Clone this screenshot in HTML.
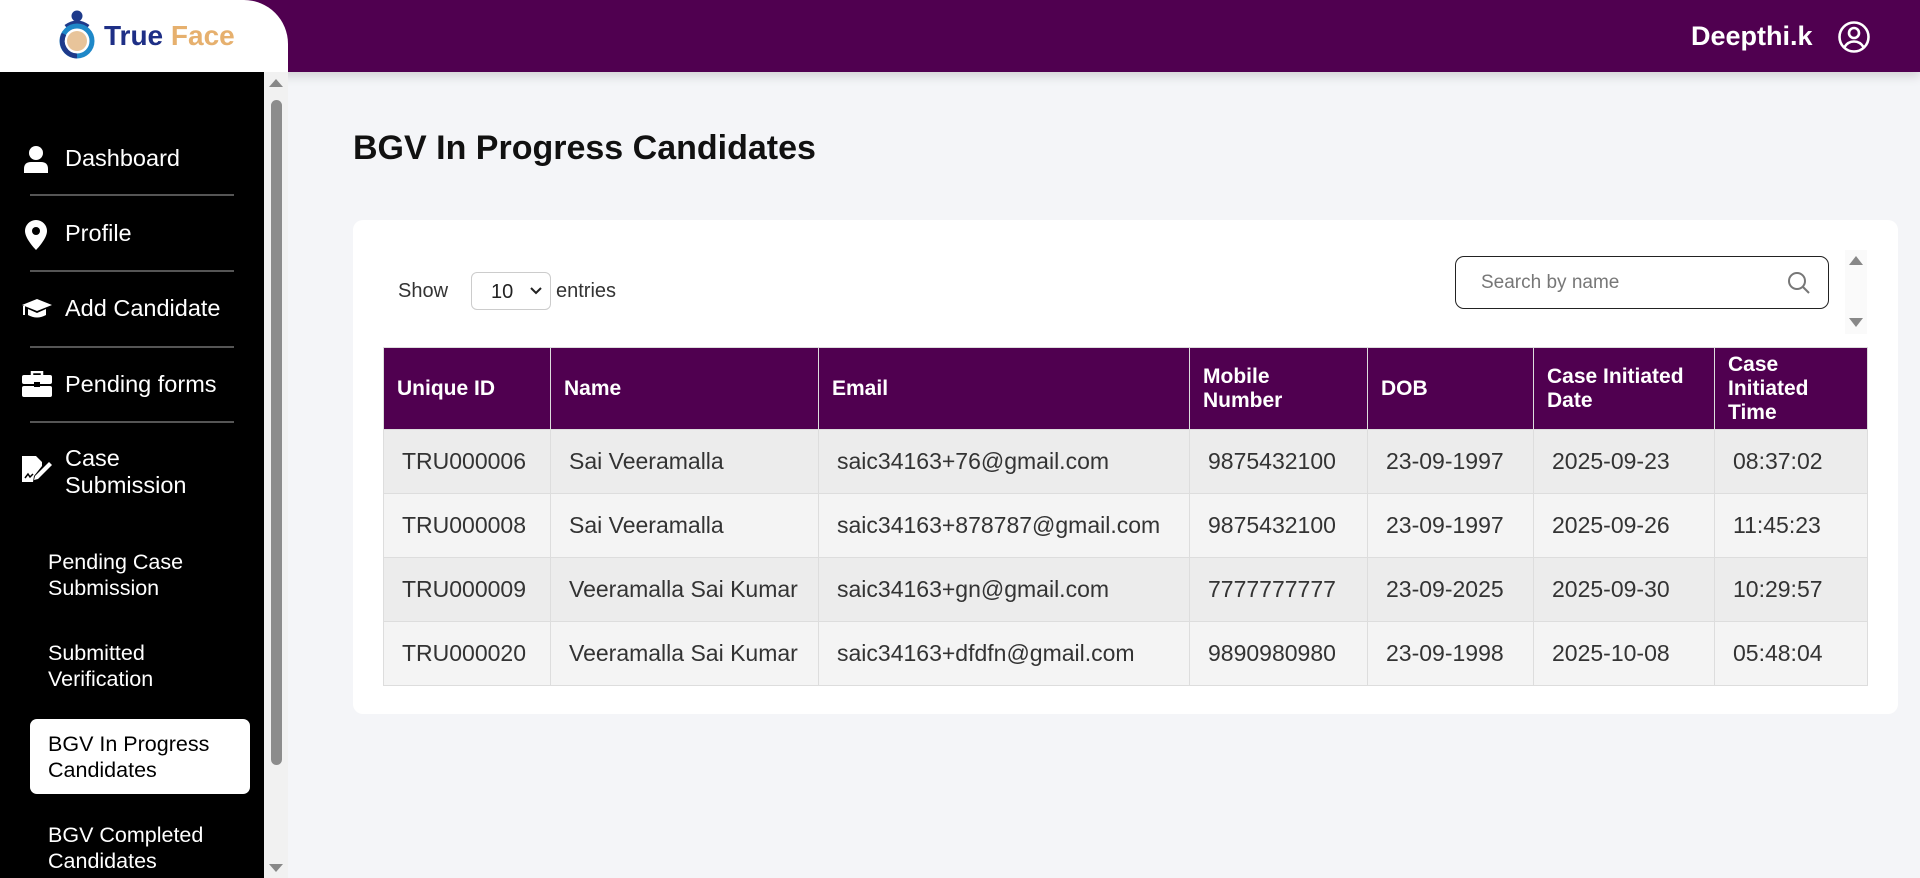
<!DOCTYPE html>
<html><head><meta charset="utf-8"><style>
*{box-sizing:border-box;margin:0;padding:0}
body{width:1920px;height:878px;overflow:hidden;background:#f4f5f8;font-family:"Liberation Sans",Arial,sans-serif;position:relative}
.top{position:absolute;left:0;top:0;width:1920px;height:72px;background:#500050;box-shadow:0 4px 10px rgba(0,0,0,.15)}
.logo{position:absolute;left:0;top:0;width:288px;height:72px;background:#fff;border-top-right-radius:44px}
.side{position:absolute;left:0;top:72px;width:264px;height:806px;background:#000}
.sb{position:absolute;left:264px;top:72px;width:24px;height:806px;background:#f1f1f1}
.thumb{position:absolute;left:271px;top:100px;width:11px;height:665px;background:#8c8c8c;border-radius:6px}
.nav{position:absolute;left:65px;color:#fff;font-size:23.5px}
.sep{position:absolute;left:30px;width:204px;height:2px;background:#555}
.ic{position:absolute;left:22px}
.sub{position:absolute;left:48px;color:#fff;font-size:21.5px;line-height:26px;font-weight:500}
.act{position:absolute;left:30px;top:719px;width:220px;height:75px;background:#fff;border-radius:7px}
.card{position:absolute;left:353px;top:220px;width:1545px;height:494px;background:#fff;border-radius:10px}
table{position:absolute;left:383px;top:347px;border-collapse:collapse;table-layout:fixed;width:1484px}
th{background:#500050;color:#fff;font-size:21px;font-weight:bold;text-align:left;padding:0 13px;height:82px;line-height:24px;border:1px solid #ddd}
td{font-size:23px;color:#333;padding:0 18px;height:64px;border:1px solid #ddd;white-space:nowrap}
tr.a td{background:#ececec} tr.b td{background:#f4f4f4}
</style></head><body>
<div class="top">
<div style="position:absolute;left:1691px;top:21px;color:#fff;font-weight:bold;font-size:27px">Deepthi.k</div>
<svg style="position:absolute;left:1837px;top:20px" width="34" height="34" viewBox="0 0 34 34"><circle cx="17" cy="17" r="14.5" fill="none" stroke="#fff" stroke-width="2.6"/><circle cx="17" cy="13" r="5" fill="none" stroke="#fff" stroke-width="2.6"/><path d="M7.5 27c2.5-4 6-5.5 9.5-5.5s7 1.5 9.5 5.5" fill="none" stroke="#fff" stroke-width="2.6"/></svg>
</div>
<div class="logo">
<svg style="position:absolute;left:56px;top:9px" width="44" height="50" viewBox="0 0 44 50"><circle cx="21" cy="7" r="5.5" fill="#1e3a8a"/><path d="M10 18 Q21 10 32 18" stroke="#1e3a8a" stroke-width="5" fill="none"/><circle cx="21" cy="32" r="15" fill="none" stroke="#1e88c8" stroke-width="5"/><path d="M8 25 A15 15 0 0 0 21 47" stroke="#1e3a8a" stroke-width="5" fill="none"/><circle cx="21" cy="32" r="10" fill="#e8c49a"/></svg>
<div style="position:absolute;left:104px;top:20px;font-size:28px;font-weight:bold;color:#1e2f86">True <span style="color:#e6b06e">Face</span></div>
</div>
<div class="side">
<svg class="ic" style="top:73px" width="28" height="28" viewBox="0 0 28 28"><circle cx="14" cy="8" r="7" fill="#fff"/><path d="M2 28v-4q0-7 7-7h10q7 0 7 7v4z" fill="#fff"/></svg>
<div class="nav" style="top:73px">Dashboard</div>
<div class="sep" style="top:122px"></div>
<svg class="ic" style="top:148px;left:25px" width="22" height="30" viewBox="0 0 22 30"><path d="M11 0A11 11 0 0 0 0 11c0 8 11 19 11 19s11-11 11-19A11 11 0 0 0 11 0z" fill="#fff"/><circle cx="11" cy="11" r="4" fill="#000"/></svg>
<div class="nav" style="top:148px">Profile</div>
<div class="sep" style="top:198px"></div>
<svg class="ic" style="top:225px" width="30" height="22" viewBox="0 0 30 22"><path d="M15 2 0 8l15 6 15-6z" fill="#fff"/><path d="M6 12v6q9 5 18 0v-6l-9 4z" fill="#fff"/><path d="M2 9v9" stroke="#fff" stroke-width="2"/></svg>
<div class="nav" style="top:223px">Add Candidate</div>
<div class="sep" style="top:274px"></div>
<svg class="ic" style="top:299px" width="30" height="26" viewBox="0 0 30 26"><path d="M10 4V1h10v3" stroke="#fff" stroke-width="2.5" fill="none"/><rect x="0" y="4" width="30" height="9" rx="2" fill="#fff"/><rect x="0" y="15" width="30" height="11" rx="2" fill="#fff"/><rect x="12" y="11" width="6" height="5" fill="#000"/></svg>
<div class="nav" style="top:299px">Pending forms</div>
<div class="sep" style="top:349px"></div>
<svg class="ic" style="top:384px" width="30" height="30" viewBox="0 0 30 30"><path d="M0 0h14l6 6v4l-8 10-1 6H0z" fill="#fff"/><path d="M27 6l3 3-14 14-4 1 1-4z" fill="#fff"/><path d="M3 22l3-4 2 3 3-3" stroke="#000" stroke-width="1.5" fill="none"/></svg>
<div class="nav" style="top:373px;line-height:27px">Case<br>Submission</div>
<div class="sub" style="top:477px">Pending Case<br>Submission</div>
<div class="sub" style="top:568px">Submitted<br>Verification</div>
<div class="act" style="top:647px"></div>
<div class="sub" style="top:659px;color:#000">BGV In Progress<br>Candidates</div>
<div class="sub" style="top:750px">BGV Completed<br>Candidates</div>
</div>
<div class="sb"></div><div class="thumb"></div>
<div style="position:absolute;left:269px;top:79px;border:7px solid transparent;border-bottom:8px solid #888;border-top:0"></div>
<div style="position:absolute;left:269px;top:864px;border:7px solid transparent;border-top:8px solid #888;border-bottom:0"></div>
<div style="position:absolute;left:353px;top:129px;font-size:34px;font-weight:bold;color:#111">BGV In Progress Candidates</div>
<div class="card"></div>
<div style="position:absolute;left:398px;top:280px;font-size:20px;color:#333">Show</div>
<div style="position:absolute;left:471px;top:272px;width:80px;height:38px;border:1px solid #ccc;border-radius:6px;background:#fff;font-size:20px;color:#222;padding:8px 0 0 19px">10<svg style="position:absolute;left:58px;top:14px" width="12" height="8" viewBox="0 0 12 8"><path d="M1 1l5 5 5-5" stroke="#222" stroke-width="2" fill="none"/></svg></div>
<div style="position:absolute;left:556px;top:280px;font-size:20px;color:#333">entries</div>
<div style="position:absolute;left:1455px;top:256px;width:374px;height:53px;border:1.5px solid #222;border-radius:9px;background:#fff"><span style="position:absolute;left:25px;top:15px;font-size:19px;color:#777">Search by name</span><svg style="position:absolute;left:331px;top:14px" width="24" height="24" viewBox="0 0 24 24"><circle cx="10" cy="10" r="8" stroke="#777" stroke-width="2" fill="none"/><path d="M16 16l6 6" stroke="#777" stroke-width="2"/></svg></div>
<div style="position:absolute;left:1845px;top:250px;width:22px;height:84px;background:#fafafa"></div>
<div style="position:absolute;left:1849px;top:256px;border:7px solid transparent;border-bottom:9px solid #888;border-top:0"></div>
<div style="position:absolute;left:1849px;top:318px;border:7px solid transparent;border-top:9px solid #888;border-bottom:0"></div>
<table>
<colgroup><col style="width:167px"><col style="width:268px"><col style="width:371px"><col style="width:178px"><col style="width:166px"><col style="width:181px"><col style="width:153px"></colgroup>
<tr><th>Unique ID</th><th>Name</th><th>Email</th><th>Mobile<br>Number</th><th>DOB</th><th>Case Initiated<br>Date</th><th>Case<br>Initiated<br>Time</th></tr>
<tr class="a"><td>TRU000006</td><td>Sai Veeramalla</td><td>saic34163+76@gmail.com</td><td>9875432100</td><td>23-09-1997</td><td>2025-09-23</td><td>08:37:02</td></tr>
<tr class="b"><td>TRU000008</td><td>Sai Veeramalla</td><td>saic34163+878787@gmail.com</td><td>9875432100</td><td>23-09-1997</td><td>2025-09-26</td><td>11:45:23</td></tr>
<tr class="a"><td>TRU000009</td><td>Veeramalla Sai Kumar</td><td>saic34163+gn@gmail.com</td><td>7777777777</td><td>23-09-2025</td><td>2025-09-30</td><td>10:29:57</td></tr>
<tr class="b"><td>TRU000020</td><td>Veeramalla Sai Kumar</td><td>saic34163+dfdfn@gmail.com</td><td>9890980980</td><td>23-09-1998</td><td>2025-10-08</td><td>05:48:04</td></tr>
</table>
</body></html>
